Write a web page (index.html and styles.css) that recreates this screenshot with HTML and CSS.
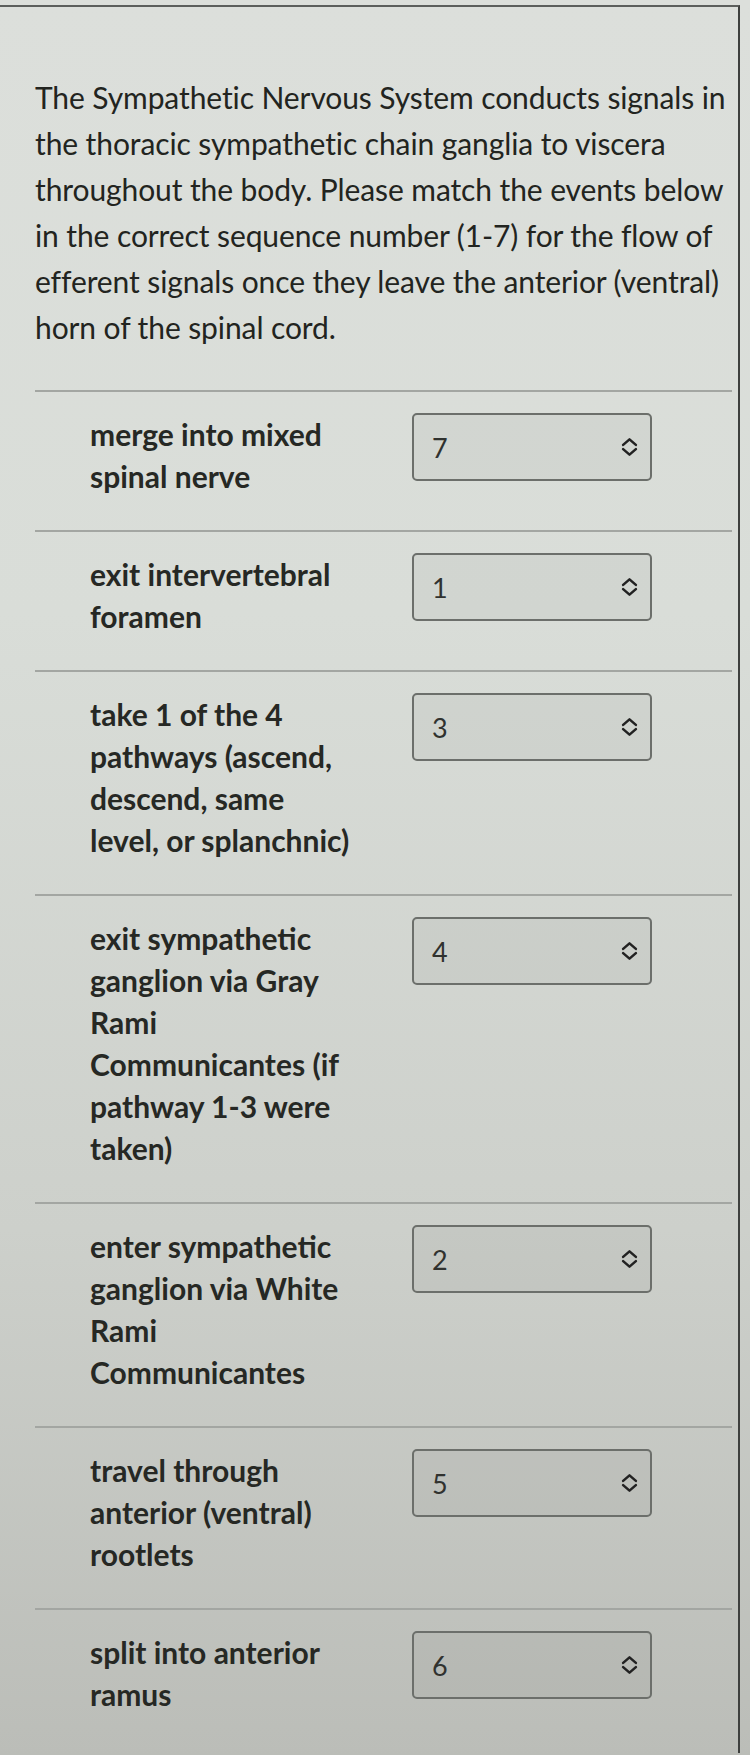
FILE: index.html
```html
<!DOCTYPE html>
<html>
<head>
<meta charset="utf-8">
<link rel="stylesheet" href="styles.css">
</head>
<body>
<div class="screen">
  <div class="panel">
    <p class="intro">The Sympathetic Nervous System conducts signals in the thoracic sympathetic chain ganglia to viscera throughout the body. Please match the events below in the correct sequence number (1-7) for the flow of efferent signals once they leave the anterior (ventral) horn of the spinal cord.</p>

    <div class="row">
      <div class="label">merge into mixed spinal nerve</div>
      <div class="select"><span class="value">7</span><svg class="chev" viewBox="0 0 16 18"><path d="M2 7 L8 1.8 L14 7 M2 11 L8 16.2 L14 11"/></svg></div>
    </div>
    <div class="row">
      <div class="label">exit intervertebral foramen</div>
      <div class="select"><span class="value">1</span><svg class="chev" viewBox="0 0 16 18"><path d="M2 7 L8 1.8 L14 7 M2 11 L8 16.2 L14 11"/></svg></div>
    </div>
    <div class="row">
      <div class="label">take 1 of the 4 pathways (ascend, descend, same level, or splanchnic)</div>
      <div class="select"><span class="value">3</span><svg class="chev" viewBox="0 0 16 18"><path d="M2 7 L8 1.8 L14 7 M2 11 L8 16.2 L14 11"/></svg></div>
    </div>
    <div class="row">
      <div class="label">exit sympathetic ganglion via Gray Rami Communicantes (if pathway 1-3 were taken)</div>
      <div class="select"><span class="value">4</span><svg class="chev" viewBox="0 0 16 18"><path d="M2 7 L8 1.8 L14 7 M2 11 L8 16.2 L14 11"/></svg></div>
    </div>
    <div class="row">
      <div class="label">enter sympathetic ganglion via White Rami Communicantes</div>
      <div class="select"><span class="value">2</span><svg class="chev" viewBox="0 0 16 18"><path d="M2 7 L8 1.8 L14 7 M2 11 L8 16.2 L14 11"/></svg></div>
    </div>
    <div class="row">
      <div class="label">travel through anterior (ventral) rootlets</div>
      <div class="select"><span class="value">5</span><svg class="chev" viewBox="0 0 16 18"><path d="M2 7 L8 1.8 L14 7 M2 11 L8 16.2 L14 11"/></svg></div>
    </div>
    <div class="row">
      <div class="label">split into anterior ramus</div>
      <div class="select"><span class="value">6</span><svg class="chev" viewBox="0 0 16 18"><path d="M2 7 L8 1.8 L14 7 M2 11 L8 16.2 L14 11"/></svg></div>
    </div>
  </div>
</div>
</body>
</html>
```

FILE: styles.css
```css
html, body {
  margin: 0;
  padding: 0;
}
body {
  width: 750px;
  height: 1755px;
  overflow: hidden;
  background: linear-gradient(180deg, #dcdfdb 0%, #d9ddd8 35%, #cdd0cb 70%, #bbbdb8 100%);
  font-family: Lato, "Open Sans", sans-serif;
  color: #222420;
}
.screen {
  padding-top: 5px;
  height: 1750px;
}
.panel {
  width: 740px;
  height: 1748px;
  border-top: 2px solid #5c5f5c;
  border-right: 2px solid #3e403e;
  box-sizing: border-box;
  padding-left: 35px;
}
.intro {
  margin: 67px 0 40px 0;
  font-size: 30px;
  line-height: 46px;
  font-weight: 400;
  letter-spacing: -0.1px;
}
.row {
  display: grid;
  grid-template-columns: 322px 240px;
  align-items: start;
  margin-right: 6px;
  border-top: 2px solid #a3a6a2;
  padding: 21px 0 33px 55px;
}
.label {
  font-size: 30px;
  line-height: 42px;
  font-weight: 700;
  width: 262px;
  color: #262824;
}
.select {
  height: 68px;
  box-sizing: border-box;
  border: 2px solid #6c6f6b;
  border-radius: 5px;
  background: rgba(0, 0, 0, 0.035);
  display: flex;
  align-items: center;
  justify-content: space-between;
  padding: 0 12px 0 18px;
}
.value {
  font-size: 27px;
  color: #30322f;
}
.chev {
  width: 17px;
  height: 20px;
  fill: none;
  stroke: #222;
  stroke-width: 2.4;
  stroke-linecap: round;
  stroke-linejoin: round;
}
```
